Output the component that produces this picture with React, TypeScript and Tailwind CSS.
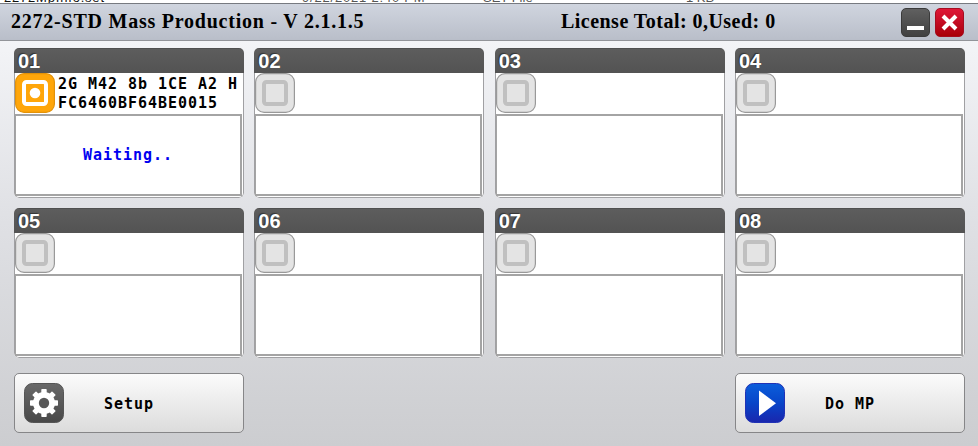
import React from 'react';

const mono = "font-['DejaVu_Sans_Mono',monospace] font-bold text-[15px] tracking-[0.97px] whitespace-pre";
const serif = "font-['Liberation_Serif',serif] font-bold text-[20px] leading-[24px] whitespace-pre text-black";

function PortIcon({ active }: { active: boolean }) {
  return (
    <svg width="40" height="40" viewBox="0 0 40 40" className="block shrink-0">
      <rect x="0.6" y="0.6" width="38.8" height="38.8" rx="8.5" fill={active ? '#ffa60a' : '#e4e4e4'} stroke={active ? '#e39209' : '#999'} strokeWidth="1.2" />
      <rect x="9" y="9" width="22" height="22" rx="2.5" fill="none" stroke={active ? '#fff' : '#c0c0c0'} strokeWidth="4" />
      {active && <circle cx="20" cy="20" r="5.3" fill="#fff" />}
    </svg>
  );
}

function Port({ id, lines, status }: { id: string; lines?: string[]; status?: string }) {
  return (
    <section className="flex h-[150px] w-[230px] flex-col overflow-hidden rounded-[5px] bg-white">
      <header className="h-[25px] shrink-0 border-t border-[#505050] bg-linear-to-b from-[#5d5d5d] to-[#535353] pl-[4px] font-['Liberation_Sans',sans-serif] text-[20px] leading-[25px] font-bold text-white [text-shadow:-1px_-1px_1px_#333]">
        {id}
      </header>
      <div className="flex grow flex-col rounded-b-[5px] border-x border-b border-[#a0a0a3]">
        <div className="flex h-[41px] shrink-0">
          <PortIcon active={!!lines} />
          <div className={`${mono} pt-[2px] pl-[3px] leading-[18.5px] text-black`}>
            {lines?.map((line) => <div key={line}>{line}</div>)}
          </div>
        </div>
        <div className="mr-px flex h-[82px] shrink-0 items-center justify-center border-t-2 border-r-2 border-b-2 border-l border-[#a4a4a4] bg-white">
          <span className={`${mono} text-[#0000f0]`}>{status}</span>
        </div>
      </div>
    </section>
  );
}

function ActionButton({ label, icon }: { label: string; icon: React.ReactNode }) {
  return (
    <button className="flex h-[60px] w-[230px] items-center rounded-[5px] border border-[#868688] bg-linear-to-b from-[#fbfbfb] to-[#dcdcdc] pl-[9px]">
      {icon}
      <span className={`${mono} w-[130px] pt-[2px] text-center text-black`}>{label}</span>
    </button>
  );
}

const columns = [
  [{ id: '01', lines: ['2G M42 8b 1CE A2 H', 'FC6460BF64BE0015'], status: 'Waiting..' }, { id: '05' }],
  [{ id: '02' }, { id: '06' }],
  [{ id: '03' }, { id: '07' }],
  [{ id: '04' }, { id: '08' }],
];

export default function App() {
  return (
    <div className="flex h-[446px] w-[978px] flex-col overflow-hidden bg-[#cccdd0]">
      <div className="flex h-[3px] shrink-0 items-end overflow-hidden bg-white pl-[4px] font-['Liberation_Sans',sans-serif] text-[13px] leading-[10px] whitespace-nowrap text-[#555]">
        <span className="w-[298px] tracking-[0.8px] text-[#111]">2272MpInfo.set</span>
        <span className="w-[181px] tracking-[0.8px]">9/22/2021 2:40 PM</span>
        <span className="w-[203px]">SET File</span>
        <span>1 KB</span>
      </div>
      <header className="flex h-[38px] shrink-0 border-t border-b border-t-[#777a80] border-b-[#929499] bg-linear-to-b from-[#d0d5df] to-[#b9bec9] pl-[11px]">
        <h1 className={`${serif} w-[550px] pt-[5px] tracking-[0.77px]`}>2272-STD Mass Production - V 2.1.1.5</h1>
        <div className={`${serif} w-[340px] pt-[5px] tracking-[0.47px]`}>License Total: 0,Used: 0</div>
        <div className="flex gap-[5px] pt-[4px]">
          <button aria-label="Minimize" className="h-[29px] w-[29px] rounded-[5px] border border-[#3b3b3b] bg-linear-to-b from-[#606060] to-[#414141]">
            <svg width="27" height="27"><rect x="5" y="17" width="17" height="4" fill="#fff" /></svg>
          </button>
          <button aria-label="Close" className="h-[29px] w-[29px] rounded-[5px] border border-[#a50d20] bg-linear-to-b from-[#df1737] to-[#a90006]">
            <svg width="27" height="27"><path d="M7 7 20 20M20 7 7 20" stroke="#fff" strokeWidth="4" /></svg>
          </button>
        </div>
      </header>
      <main className="flex grow flex-col gap-[15px] bg-linear-to-b from-[#f3f4f7] via-[#dfe0e4] via-45% to-[#cccdd0] pt-[7px] pr-[13px] pl-[14px]">
        <div className="flex justify-between">
          {columns.map((column) => (
            <div key={column[0].id} className="flex flex-col gap-[10px]">
              {column.map((port) => <Port key={port.id} {...port} />)}
            </div>
          ))}
        </div>
        <div className="flex justify-between">
          <ActionButton
            label="Setup"
            icon={
              <svg width="40" height="40" viewBox="0 0 40 40">
                <defs><linearGradient id="dark" x2="0" y2="1"><stop stopColor="#696969" /><stop offset="1" stopColor="#484848" /></linearGradient></defs>
                <rect x=".5" y=".5" width="39" height="39" rx="8" fill="url(#dark)" stroke="#555" />
                <g fill="#fff">
                  {[0, 45, 90, 135].map((angle) => <rect key={angle} x="17.3" y="6" width="5.4" height="28" rx=".7" transform={`rotate(${angle} 20 20)`} />)}
                  <circle cx="20" cy="20" r="11" />
                </g>
                <circle cx="20" cy="20" r="5.2" fill="#585858" />
              </svg>
            }
          />
          <ActionButton
            label="Do MP"
            icon={
              <svg width="40" height="40" viewBox="0 0 40 40">
                <defs><linearGradient id="blue" x2="0" y2="1"><stop stopColor="#0b5edb" /><stop offset=".5" stopColor="#0845c9" /><stop offset="1" stopColor="#1a26ad" /></linearGradient></defs>
                <rect x=".5" y=".5" width="39" height="39" rx="8" fill="url(#blue)" stroke="#2032b5" />
                <path d="M14 7.5 31 20.2 14 33Z" fill="#fff" />
              </svg>
            }
          />
        </div>
      </main>
    </div>
  );
}
